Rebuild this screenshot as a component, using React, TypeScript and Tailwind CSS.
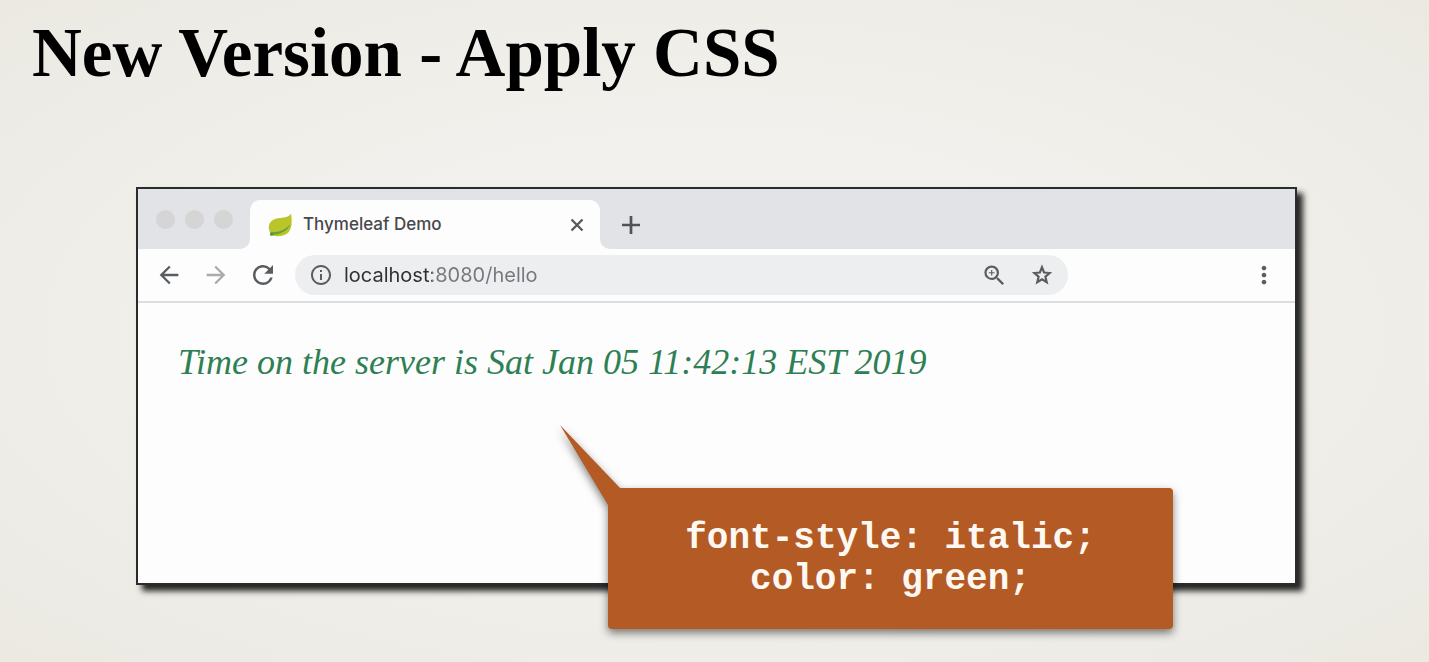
import React from "react";
import {
  MdArrowBack,
  MdArrowForward,
  MdInfoOutline,
  MdMoreVert,
  MdRefresh,
  MdZoomIn,
} from "react-icons/md";

function LeafIcon() {
  return (
    <svg viewBox="0 0 24 24" className="size-6 shrink-0" aria-hidden="true">
      <path
        d="M23 .6C21 4 17.500 4.600 12 5 4.800 5.500.8 9 .8 14.600c0 2.200.8 4.200 1.900 5.600l.3 2.400c6.300.8 12 1.200 16.200-2C24 16.800 24.400 8.400 23 .6Z"
        fill="#bac52c"
      />
      <path d="M3 19.200c7.600.2 14.400-2.200 19.400-8.200-2.600 7-9.400 10.400-17.800 10.800l-1.800 1Z" fill="#6f9f35" />
      <circle cx="3.600" cy="21" r="1.800" fill="#4f9a3e" />
    </svg>
  );
}

function CloseIcon() {
  return (
    <svg viewBox="0 0 20 20" className="size-5" fill="none" stroke="currentColor" strokeWidth="2.300" aria-hidden="true">
      <path d="M4.500 4.500 15.500 15.500M15.500 4.500 4.500 15.500" />
    </svg>
  );
}

function PlusIcon() {
  return (
    <svg viewBox="0 0 30 30" className="size-[30px]" fill="none" stroke="currentColor" strokeWidth="2.700" aria-hidden="true">
      <path d="M15 6V24M6 15H24" />
    </svg>
  );
}

function StarIcon() {
  return (
    <svg viewBox="0 0 24 24" className="size-6" fill="none" stroke="currentColor" strokeWidth="2.200" aria-hidden="true">
      <path d="m12 4.300 2.100 5.200 5.500.5-4.200 3.700 1.300 5.500-4.700-2.900-4.700 2.900 1.300-5.500L4.400 10l5.500-.5Z" />
    </svg>
  );
}

function TabStrip() {
  return (
    <div className="flex h-[60px] items-end bg-[#e1e3e7]">
      <div className="flex h-full w-28 shrink-0 items-center gap-2.5 pl-[18px]">
        <span className="size-[19px] rounded-full bg-[#d5d5d6]" />
        <span className="size-[19px] rounded-full bg-[#d5d5d6]" />
        <span className="size-[19px] rounded-full bg-[#d5d5d6]" />
      </div>
      <div className="relative flex h-[49px] w-[350px] items-center rounded-t-[10px] bg-[#fdfdfd] pr-[13px] pl-[18px]">
        <span className="absolute bottom-0 -left-2.5 size-2.5 bg-[#fdfdfd]">
          <span className="block size-full rounded-br-[10px] bg-[#e1e3e7]" />
        </span>
        <span className="absolute -right-2.5 bottom-0 size-2.5 bg-[#fdfdfd]">
          <span className="block size-full rounded-bl-[10px] bg-[#e1e3e7]" />
        </span>
        <LeafIcon />
        <span className="ml-[11px] flex-1 text-[17px] font-medium text-[#46484b]">Thymeleaf Demo</span>
        <button type="button" aria-label="Close tab" className="text-[#55585c]">
          <CloseIcon />
        </button>
      </div>
      <button
        type="button"
        aria-label="New tab"
        className="ml-4 flex h-[49px] items-center text-[#505357]"
      >
        <PlusIcon />
      </button>
    </div>
  );
}

function Toolbar() {
  return (
    <div className="flex h-[54px] items-center gap-[17px] border-b-2 border-[#dcddde] bg-[#fdfdfd] pr-4 pl-4 text-[#5a5d60]">
      <button type="button" aria-label="Back" className="grid size-[30px] place-items-center">
        <MdArrowBack size={28} />
      </button>
      <button type="button" aria-label="Forward" className="grid size-[30px] place-items-center text-[#a9abad]">
        <MdArrowForward size={28} />
      </button>
      <button type="button" aria-label="Reload" className="grid size-[30px] place-items-center">
        <MdRefresh size={30} />
      </button>
      <div className="flex h-10 min-w-0 flex-1 items-center rounded-full bg-[#eceef0] pr-[14px] pl-[14px]">
        <button type="button" aria-label="Site information">
          <MdInfoOutline size={24} />
        </button>
        <input
          type="text"
          aria-label="Address"
          defaultValue="localhost:8080/hello"
          className="ml-[11px] min-w-0 flex-1 bg-transparent bg-linear-to-r from-[#2e3033] from-[88px] to-[#75797d] to-[88px] bg-clip-text text-xl text-transparent outline-none"
        />
        <button type="button" aria-label="Zoom">
          <MdZoomIn size={27} />
        </button>
        <button type="button" aria-label="Bookmark this page" className="ml-[22px]">
          <StarIcon />
        </button>
      </div>
      <button type="button" aria-label="Menu" className="ml-[164px] grid size-[30px] place-items-center">
        <MdMoreVert size={28} />
      </button>
    </div>
  );
}

function Callout() {
  return (
    <div className="absolute top-[299px] left-[470px] h-[141px] w-[565px] drop-shadow-[0_4px_4px_rgba(0,0,0,0.5)]">
      <svg
        viewBox="0 0 64 84"
        className="absolute -top-[63px] -left-12 h-[84px] w-16"
        aria-hidden="true"
      >
        <path d="M0 0 61 64 48 80Z" fill="#b45a24" />
      </svg>
      <pre className="relative flex h-full items-center justify-center rounded-sm bg-[#b45a24] text-center font-['Liberation_Mono',monospace] text-4xl leading-[41px] font-bold text-[#fdf8f2]">
        {"font-style: italic;\ncolor: green;"}
      </pre>
    </div>
  );
}

export default function App() {
  return (
    <main className="min-h-screen bg-[#efeee9] bg-[radial-gradient(ellipse_at_center,#f2f1ed_40%,#ebe9e2_100%)] pb-[76px]">
      <h1 className="pt-[15px] pl-8 font-['Liberation_Serif',serif] text-[69px] leading-[76px] font-bold text-black">
        New Version - Apply CSS
      </h1>
      <section className="relative mt-24 mr-[132px] ml-[136px] h-[398px] border-2 border-[#2a2c2c] bg-[#fdfdfd] font-['Inter',sans-serif] shadow-[6px_6px_6px_rgba(0,0,0,0.85)]">
        <TabStrip />
        <Toolbar />
        <p className="pt-[37px] pl-10 font-['Liberation_Serif',serif] text-4xl leading-[44px] text-[#2e8054] italic">
          Time on the server is Sat Jan 05 11:42:13 EST 2019
        </p>
        <Callout />
      </section>
    </main>
  );
}
